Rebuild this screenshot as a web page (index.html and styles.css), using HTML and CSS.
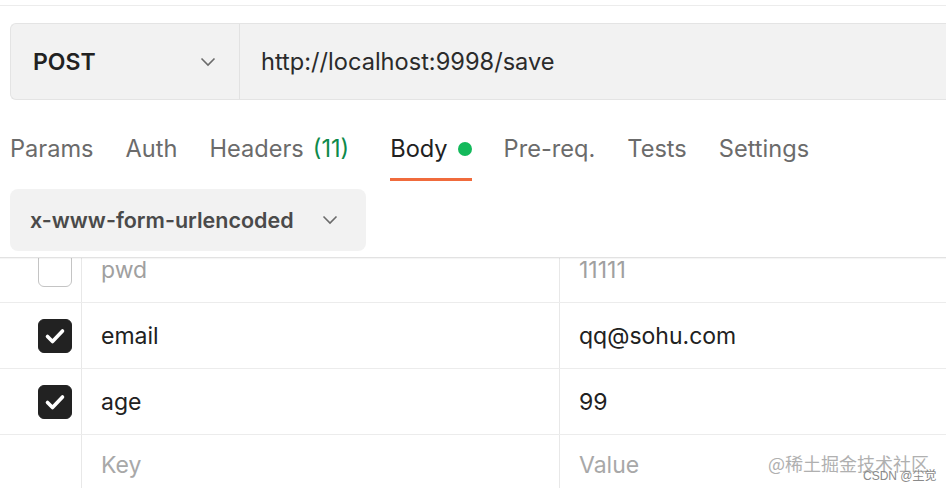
FILE: index.html
```html
<!DOCTYPE html>
<html>
<head>
	<meta charset="UTF-8">
	<title>POST save</title>
	<link rel="stylesheet" href="styles.css">
</head>
<body>
<div class="topline"></div>
<div class="request">
	<div class="method">
		<span class="method-name">POST</span>
		<svg class="chev" width="16" height="10" viewBox="0 0 16 10"><path d="M1.5 1.5 8 8l6.5-6.5" fill="none" stroke="#6b6b6b" stroke-width="1.6"/></svg>
	</div>
	<div class="url">http://localhost:9998/save</div>
</div>
<div class="tabs">
	<div class="tab">Params</div>
	<div class="tab">Auth</div>
	<div class="tab">Headers <span class="count">(11)</span></div>
	<div class="tab active">Body <span class="dot"></span></div>
	<div class="tab">Pre-req.</div>
	<div class="tab">Tests</div>
	<div class="tab">Settings</div>
</div>
<div class="bodybar">
	<div class="select">
		<span>x-www-form-urlencoded</span>
		<svg class="chev" width="16" height="10" viewBox="0 0 16 10"><path d="M1.5 1.5 8 8l6.5-6.5" fill="none" stroke="#6b6b6b" stroke-width="1.6"/></svg>
	</div>
</div>
<div class="table">
	<div class="rows">
		<div class="row off">
			<div class="cell check"><span class="box"></span></div>
			<div class="cell key">pwd</div>
			<div class="cell value">11111</div>
		</div>
		<div class="row">
			<div class="cell check"><span class="box on"><svg width="24" height="20" viewBox="0 0 24 20"><path d="M4.5 10.5 9.5 15.5 19.5 5" fill="none" stroke="#fff" stroke-width="3.6" stroke-linecap="round" stroke-linejoin="round"/></svg></span></div>
			<div class="cell key">email</div>
			<div class="cell value">qq@sohu.com</div>
		</div>
		<div class="row">
			<div class="cell check"><span class="box on"><svg width="24" height="20" viewBox="0 0 24 20"><path d="M4.5 10.5 9.5 15.5 19.5 5" fill="none" stroke="#fff" stroke-width="3.6" stroke-linecap="round" stroke-linejoin="round"/></svg></span></div>
			<div class="cell key">age</div>
			<div class="cell value">99</div>
		</div>
		<div class="row empty">
			<div class="cell check"></div>
			<div class="cell key">Key</div>
			<div class="cell value">Value</div>
		</div>
	</div>
</div>
<div class="mark">
	<span class="mark-big">@稀土掘金技术社区</span>
	<span class="mark-small">CSDN @尘觉</span>
</div>
</body>
</html>
```
FILE: styles.css
```css
body {
	margin: 0;
	background: #fff;
	font-family: Inter, "Noto Sans", sans-serif;
	color: #212121;
	overflow: hidden;
}
.topline {
	height: 5px;
	border-bottom: 1px solid #ececec;
}
.request {
	display: flex;
	margin: 17px 0 0 10px;
	height: 75px;
	background: #f2f2f2;
	border: 1px solid #e4e4e4;
	border-right: none;
	border-radius: 6px 0 0 6px;
	font-size: 23.6px;
}
.method {
	display: flex;
	align-items: center;
	justify-content: space-between;
	width: 183px;
	padding: 0 23px 0 22px;
	border-right: 1px solid #e2e2e2;
}
.method-name {
	font-weight: 600;
	font-size: 23px;
}
.url {
	display: flex;
	align-items: center;
	padding-left: 21px;
	color: #2b2b2b;
}
.tabs {
	display: flex;
	gap: 32px;
	padding-left: 10px;
	font-size: 23.6px;
	color: #6b6b6b;
}
.tab {
	padding: 34px 0 14px;
	line-height: 30px;
	border-bottom: 3px solid transparent;
	display: flex;
	align-items: center;
}
.tab.active {
	color: #212121;
	border-bottom-color: #f06b3c;
	margin-left: 9px;
}
.count {
	color: #0e8a4b;
	margin-left: 9px;
}
.dot {
	width: 14px;
	height: 14px;
	border-radius: 50%;
	background: #13b95b;
	margin-left: 10px;
}
.bodybar {
	padding: 8px 0 6px 10px;
	border-bottom: 1px solid #e2e2e2;
	box-shadow: 0 1px 1px rgba(0, 0, 0, .04);
	position: relative;
	z-index: 1;
}
.select {
	display: flex;
	align-items: center;
	justify-content: space-between;
	box-sizing: border-box;
	width: 356px;
	height: 62px;
	padding: 0 28px 0 20px;
	background: #f2f2f2;
	border-radius: 8px;
	font-size: 21.5px;
	font-weight: 600;
	color: #4a4a4a;
}
.table {
	height: 230px;
	overflow: hidden;
}
.rows {
	margin-top: -21px;
}
.row {
	display: flex;
	height: 65px;
	border-bottom: 1px solid #ececec;
	font-size: 23px;
}
.cell {
	display: flex;
	align-items: center;
	box-sizing: border-box;
}
.check {
	width: 82px;
	padding-left: 38px;
	border-right: 1px solid #e8e8e8;
}
.key {
	width: 478px;
	padding-left: 19px;
	border-right: 1px solid #e8e8e8;
}
.value {
	flex: 1;
	padding-left: 19px;
}
.box {
	box-sizing: border-box;
	width: 34px;
	height: 34px;
	border: 1.5px solid #c4c4c4;
	border-radius: 6px;
	display: flex;
	align-items: center;
	justify-content: center;
}
.box.on {
	background: #222;
	border-color: #222;
}
.off .key, .off .value {
	color: #a0a0a0;
}
.empty .cell {
	padding-bottom: 6px;
}
.empty .key, .empty .value {
	color: #a8a8a8;
}
.mark {
	position: absolute;
	left: 768px;
	top: 450px;
	white-space: nowrap;
}
.mark-big {
	font-family: "Noto Sans CJK SC", sans-serif;
	font-size: 18px;
	color: #b0b0b0;
}
.mark-small {
	position: absolute;
	left: 95px;
	top: 16px;
	font-family: "Liberation Sans", "Noto Sans CJK SC", sans-serif;
	font-size: 12px;
	color: #8a8a8a;
}
```
